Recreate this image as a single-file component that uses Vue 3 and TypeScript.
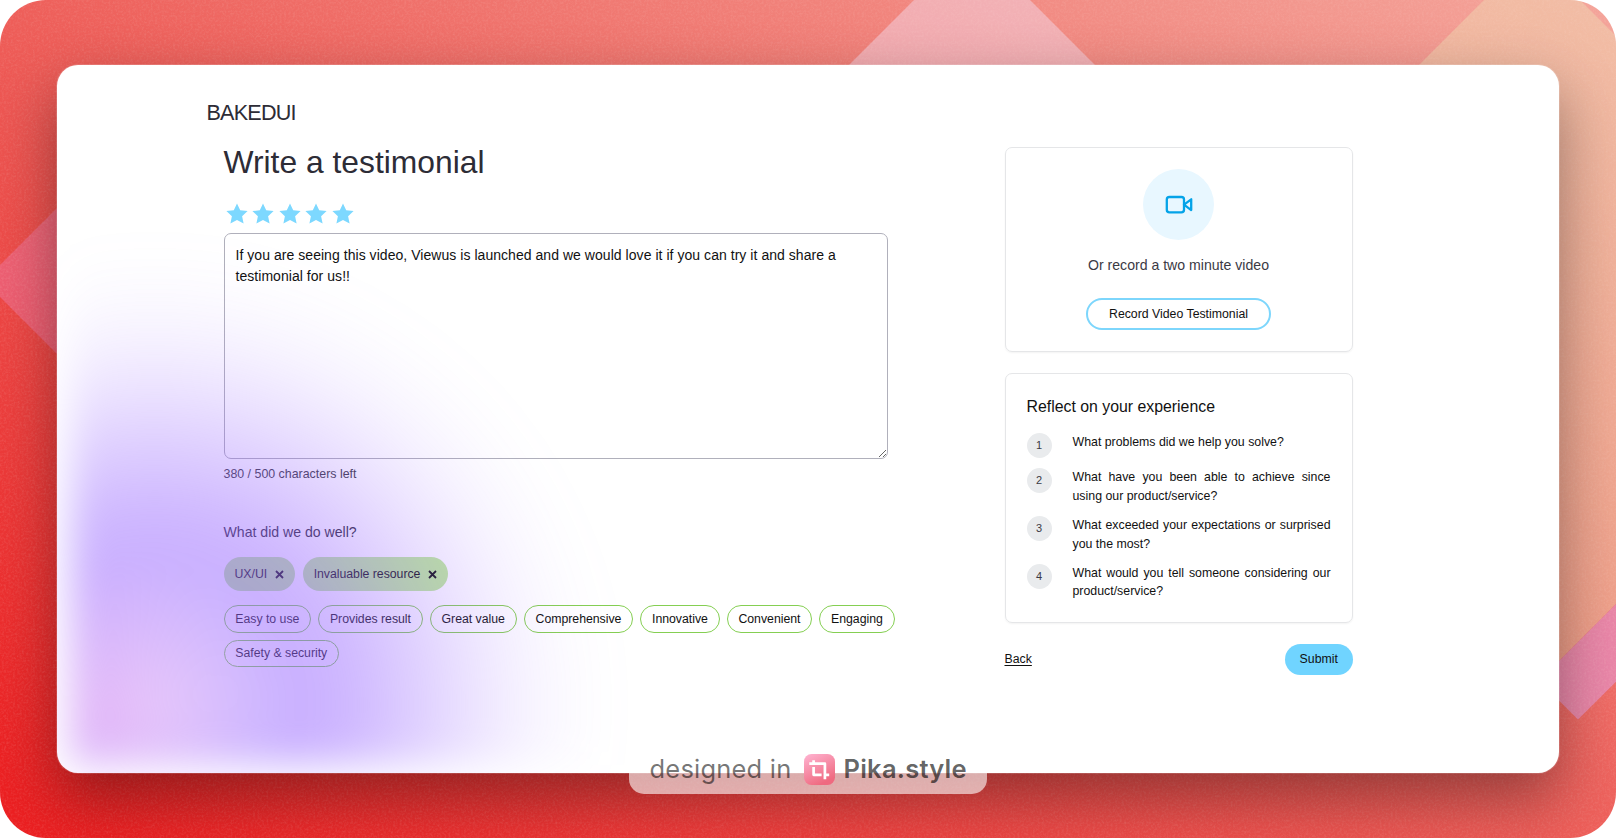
<script setup lang="ts">
import { computed, ref } from 'vue'

const limit = 500
const message = ref(
  'If you are seeing this video, Viewus is launched and we would love it if you can try it and share a testimonial for us!!',
)
const remaining = computed(() => limit - message.value.length)

const stars = [1, 2, 3, 4, 5]
const selected = ref<string[]>(['UX/UI', 'Invaluable resource'])
const options = ref<string[]>([
  'Easy to use',
  'Provides result',
  'Great value',
  'Comprehensive',
  'Innovative',
  'Convenient',
  'Engaging',
  'Safety & security',
])
const questions: string[] = [
  'What problems did we help you solve?',
  'What have you been able to achieve since using our product/service?',
  'What exceeded your expectations or surprised you the most?',
  'What would you tell someone considering our product/service?',
]

function add(tag: string) {
  options.value = options.value.filter((t) => t !== tag)
  selected.value.push(tag)
}
function remove(tag: string) {
  selected.value = selected.value.filter((t) => t !== tag)
  options.value.push(tag)
}
</script>

<template>
  <div class="canvas">
    <svg class="backdrop" width="1616" height="838" viewBox="0 0 1616 838" aria-hidden="true">
      <defs>
        <filter id="grain" x="0" y="0" width="100%" height="100%">
          <feTurbulence type="fractalNoise" baseFrequency="0.45" numOctaves="3" seed="4" />
          <feColorMatrix values="0 0 0 0 1  0 0 0 0 0.8  0 0 0 0 0.75  1.4 0 0 0 -0.55" />
        </filter>
      </defs>
      <polygon points="972,-58 1172,142 972,342 772,142" fill="#f3e4fb" fill-opacity=".42" />
      <polygon points="1532,-48 1640,60 1640,580 1540,680 1400,680 1400,84" fill="#efe0b4" fill-opacity=".42" />
      <polygon points="1559,661 1616,604 1656,564 1656,642 1578,719.500 1540,681.500" fill="#ea86a8" />
      <polygon points="-16,281 184,81 384,281 184,481" fill="#f08fd0" fill-opacity=".32" />
      <rect width="1616" height="838" filter="url(#grain)" opacity=".17" />
    </svg>

    <div class="window">
      <header class="brand">BAKEDUI</header>
      <div class="columns">
        <main class="form">
          <h1>Write a testimonial</h1>
          <div class="stars">
            <svg v-for="s in stars" :key="s" viewBox="0 0 22 21" width="22" height="21">
              <path
                d="M11 .4 14.200 7.300 21.600 8.100 16.100 13.200 17.600 20.500 11 16.900 4.400 20.500 5.900 13.200 .4 8.100 7.800 7.300Z"
                fill="#7dd8ff"
              />
            </svg>
          </div>
          <textarea v-model="message" spellcheck="false"></textarea>
          <p class="count">{{ remaining }} / {{ limit }} characters left</p>
          <h2 class="ask">What did we do well?</h2>
          <div class="chosen">
            <button v-for="t in selected" :key="t" class="pill" @click="remove(t)">
              {{ t }}
              <svg width="9" height="9" viewBox="0 0 9 9"><path d="M1 1 8 8M8 1 1 8" /></svg>
            </button>
          </div>
          <div class="options">
            <button v-for="t in options" :key="t" class="option" @click="add(t)">{{ t }}</button>
          </div>
        </main>

        <aside class="side">
          <section class="card video">
            <div class="disc">
              <svg width="28" height="20" viewBox="0 0 28 20" fill="none" stroke="#04a3e8" stroke-width="2.300" stroke-linejoin="round">
                <rect x="1.800" y="2" width="17.200" height="15.400" rx="2.600" />
                <path d="M19 9.700 26.200 4.300V15.100Z" />
              </svg>
            </div>
            <p>Or record a two minute video</p>
            <button class="record">Record Video Testimonial</button>
          </section>
          <section class="card reflect">
            <h3>Reflect on your experience</h3>
            <ol>
              <li v-for="(q, i) in questions" :key="q">
                <span class="num">{{ i + 1 }}</span>
                <span class="q">{{ q }}</span>
              </li>
            </ol>
          </section>
          <div class="actions">
            <a class="back">Back</a>
            <button class="submit">Submit</button>
          </div>
        </aside>
      </div>
      <div class="glow"></div>
    </div>

    <div class="badge">
      <span class="by">designed in</span>
      <svg width="31" height="31" viewBox="0 0 31 31">
        <defs>
          <linearGradient id="pika" x1="0" y1="0" x2=".5" y2="1">
            <stop offset="0" stop-color="#ffb4d2" />
            <stop offset="1" stop-color="#ef6a80" />
          </linearGradient>
        </defs>
        <rect width="31" height="31" rx="7.500" fill="url(#pika)" />
        <g fill="none" stroke="#fff" stroke-width="2.700" stroke-linejoin="round">
          <path d="M5.300 9.700H20.900V25.300" />
          <path d="M9.600 6.300V9.700M9.600 13V20.800H17.600M20.900 20.800H25.200" />
        </g>
      </svg>
      <span class="name">Pika.style</span>
    </div>
  </div>
</template>

<style>
body {
  margin: 0;
  background: #fff;
}
</style>

<style scoped>
.canvas {
  position: relative;
  box-sizing: border-box;
  width: 1616px;
  height: 838px;
  padding: 65px 57px;
  overflow: hidden;
  border-radius: 46px;
  background: linear-gradient(to top right, #ec2022 0%, #ec2022 3%, #ee5f5a 50%, #f4a59b 100%);
  font-family: 'Liberation Sans', Arial, sans-serif;
  color: #111;
}
.backdrop {
  position: absolute;
  inset: 0;
}
.window {
  position: relative;
  box-sizing: border-box;
  width: 1502px;
  height: 708px;
  padding: 35px 206.5px 0 149.5px;
  overflow: hidden;
  border-radius: 21px;
  background: #fff;
  box-shadow:
    0 0 0 1px rgba(255, 255, 255, 0.15),
    0 26px 60px rgba(0, 0, 0, 0.38);
}
h1,
h2,
h3,
p,
ol {
  margin: 0;
  padding: 0;
  font-weight: 400;
}
button {
  font-family: inherit;
  color: inherit;
  box-sizing: border-box;
  border: 0;
  background: none;
  cursor: pointer;
}
.brand {
  height: 26px;
  line-height: 26px;
  font-size: 21.600px;
  letter-spacing: -0.8px;
  color: #2d2c36;
}
.columns {
  display: flex;
  justify-content: space-between;
  padding-left: 17px;
}
.form {
  width: 672px;
}
h1 {
  padding-top: 16px;
  height: 41px;
  line-height: 40px;
  font-size: 31.800px;
  color: #2d2c36;
}
.stars {
  display: flex;
  gap: 4.500px;
  height: 21px;
  margin: 19.500px 0 0 2.300px;
}
textarea {
  display: block;
  box-sizing: border-box;
  width: 664.500px;
  height: 226px;
  margin-top: 9.700px;
  padding: 11px 11px;
  border: 1px solid #b0b0bb;
  border-radius: 7px;
  outline: none;
  background: transparent;
  font-family: inherit;
  font-size: 14px;
  letter-spacing: 0.045px;
  line-height: 21.300px;
  color: #111;
}
.count {
  margin-top: 6px;
  line-height: 18px;
  font-size: 12.400px;
  color: #3b3a45;
}
.ask {
  margin-top: 39px;
  line-height: 20px;
  font-size: 14.100px;
  color: #2d2c36;
}
.chosen {
  display: flex;
  gap: 7.500px;
  margin-top: 15px;
}
.pill {
  display: flex;
  align-items: center;
  gap: 7.500px;
  height: 34px;
  padding: 0 11.500px 0 11px;
  border-radius: 17px;
  background: #bfec9c;
  font-size: 12.300px;
  letter-spacing: -0.03px;
}
.pill svg {
  fill: none;
  stroke: #111;
  stroke-width: 1.800;
}
.options {
  display: flex;
  flex-wrap: wrap;
  gap: 7px;
  margin-top: 14px;
}
.option {
  height: 27.500px;
  padding: 0 10.800px;
  border: 1px solid #85cf52;
  border-radius: 14px;
  font-size: 12.300px;
  letter-spacing: -0.02px;
}
.side {
  width: 348px;
  padding-top: 21px;
}
.card {
  box-sizing: border-box;
  border: 1px solid #e5e6e8;
  border-radius: 7px;
  box-shadow: 0 1px 2px rgba(0, 0, 0, 0.05);
}
.video {
  display: flex;
  flex-direction: column;
  align-items: center;
  height: 204.500px;
  padding-top: 21px;
}
.disc {
  display: flex;
  align-items: center;
  justify-content: center;
  width: 71px;
  height: 71px;
  border-radius: 50%;
  background: #e8f7ff;
}
.video p {
  margin-top: 15px;
  line-height: 20px;
  font-size: 14.100px;
  color: #3b3a45;
}
.record {
  width: 185px;
  height: 32px;
  margin-top: 23px;
  border: 2px solid #7dd6fc;
  border-radius: 16px;
  font-size: 12.300px;
}
.reflect {
  height: 250px;
  margin-top: 21.500px;
  padding: 23px 21px 0;
}
.reflect h3 {
  line-height: 20px;
  font-size: 15.850px;
}
.reflect ol {
  display: flex;
  flex-direction: column;
  gap: 10.600px;
  margin-top: 15.700px;
  list-style: none;
}
.reflect li {
  display: flex;
  gap: 21px;
}
.num {
  flex: none;
  width: 25px;
  height: 25px;
  border-radius: 50%;
  background: #e9ebed;
  text-align: center;
  line-height: 24px;
  font-size: 11px;
  color: #3b3a45;
}
.q {
  flex: 1;
  line-height: 18.600px;
  font-size: 12.350px;
  text-align: justify;
}
.actions {
  display: flex;
  align-items: center;
  justify-content: space-between;
  margin-top: 21px;
}
.back {
  margin-top: -2px;
  font-size: 12.300px;
  text-decoration: underline;
  text-underline-offset: 1.500px;
}
.submit {
  width: 67.500px;
  height: 31px;
  padding-bottom: 2px;
  border-radius: 16px;
  background: #70d4ff;
  font-size: 12.300px;
}
/* Soft lavender light laid over the lower left corner of the page. */
.glow {
  position: absolute;
  left: 13px;
  top: 60px;
  width: 640px;
  height: 640px;
  filter: blur(19px);
  pointer-events: none;
  background:
    radial-gradient(circle at 35px 590px, rgba(250, 165, 235, 0.36) 0, rgba(250, 165, 235, 0.24) 50px, rgba(250, 165, 235, 0) 160px),
    radial-gradient(
      ellipse 440px 440px at 85px 580px,
      rgba(150, 100, 255, 0.3) 0%,
      rgba(150, 100, 255, 0.44) 20%,
      rgba(150, 100, 255, 0.51) 33%,
      rgba(150, 100, 255, 0.46) 44%,
      rgba(150, 100, 255, 0.32) 58%,
      rgba(150, 100, 255, 0.19) 71%,
      rgba(150, 100, 255, 0.08) 84%,
      rgba(150, 100, 255, 0.02) 96%,
      rgba(150, 100, 255, 0) 106%
    );
}
.badge {
  position: absolute;
  left: 629px;
  top: 744px;
  display: flex;
  align-items: center;
  box-sizing: border-box;
  width: 358px;
  height: 50px;
  padding: 0 0 1px 20.500px;
  border-radius: 15px;
  background: rgba(255, 255, 255, 0.6);
  font-family: Inter, sans-serif;
  font-size: 25.500px;
  color: rgba(0, 0, 0, 0.54);
}
.badge svg {
  position: relative;
  top: 1px;
}
.by {
  width: 154px;
  letter-spacing: 0.2px;
}
.name {
  margin-left: 9px;
  font-weight: 600;
  letter-spacing: 0.25px;
  color: rgba(0, 0, 0, 0.62);
}
</style>
